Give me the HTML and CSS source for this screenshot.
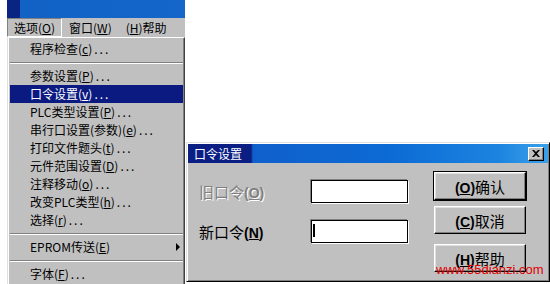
FILE: index.html
```html
<!DOCTYPE html>
<html lang="zh">
<head>
  <meta charset="UTF-8">
  <title>口令设置</title>
  <link rel="stylesheet" href="styles.css">
</head>
<body>
  <div class="app">
    <div class="app-title"></div>
    <div class="menubar">
      <span class="menubar-item is-open">选项(<u>O</u>)</span>
      <span class="menubar-item">窗口(<u>W</u>)</span>
      <span class="menubar-item">(<u>H</u>)帮助</span>
    </div>
    <ul class="dropdown">
      <li class="item">程序检查(<u>c</u>)<span class="dots">...</span></li>
      <li class="sep"></li>
      <li class="item">参数设置(<u>P</u>)<span class="dots">...</span></li>
      <li class="item is-active">口令设置(<u>v</u>)<span class="dots">...</span></li>
      <li class="item">PLC类型设置(<u>P</u>)<span class="dots">...</span></li>
      <li class="item">串行口设置(参数)(<u>e</u>)<span class="dots">...</span></li>
      <li class="item">打印文件题头(<u>t</u>)<span class="dots">...</span></li>
      <li class="item">元件范围设置(<u>D</u>)<span class="dots">...</span></li>
      <li class="item">注释移动(<u>o</u>)<span class="dots">...</span></li>
      <li class="item">改变PLC类型(<u>h</u>)<span class="dots">...</span></li>
      <li class="item">选择(<u>r</u>)<span class="dots">...</span></li>
      <li class="sep"></li>
      <li class="item has-sub">EPROM传送(<u>E</u>)<i class="arrow"></i></li>
      <li class="sep"></li>
      <li class="item">字体(<u>F</u>)<span class="dots">...</span></li>
    </ul>
  </div>

  <div class="dialog">
    <div class="dialog-title">
      <span>口令设置</span>
      <button class="close">
        <svg width="8" height="7" viewBox="0 0 8 7"><path d="M0 0h2l2 2 2-2h2L5 3.5 8 7H6L4 5 2 7H0l3-3.5z" fill="#000"/></svg>
      </button>
    </div>
    <div class="dialog-body">
      <div class="fields">
        <div class="field is-disabled">
          <label>旧口令<b>(<u>O</u>)</b></label>
          <span class="input"></span>
        </div>
        <div class="field">
          <label>新口令<b>(<u>N</u>)</b></label>
          <span class="input"><i class="caret"></i></span>
        </div>
      </div>
      <div class="actions">
        <button class="btn is-default"><b>(<u>O</u>)</b>确认</button>
        <button class="btn btn-cancel"><b>(<u>C</u>)</b>取消</button>
        <button class="btn btn-help"><b>(<u>H</u>)</b>帮助</button>
      </div>
    </div>
  </div>

  <div class="watermark">www.55dianzi.com</div>
</body>
</html>
```

FILE: styles.css
```css
* { box-sizing: border-box; }
body {
  margin: 0;
  height: 284px;
  overflow: hidden;
  position: relative;
  background: #fff;
  display: flex; align-items: flex-start;
  font-family: "Noto Sans CJK SC", sans-serif;
  font-size: 12px;
  color: #000;
}
u { text-decoration: underline; text-underline-offset: 1px; }

/* main window, left part */
.app { margin-left: 7px; width: 178px; }
.app-title {
  height: 18px;
  background: linear-gradient(90deg, #0a2482 0, #0a2482 13px, #1262c6 13px, #1466ca 100%);
}
.menubar {
  height: 19px;
  background: #c0c0c0;
  display: flex; align-items: center;
}
.menubar-item {
  line-height: 17px;
  padding: 0 6px;
  border: 1px solid transparent;
}
.menubar-item.is-open { border-color: #808080 #fff #fff #808080; }

.dropdown {
  list-style: none;
  margin: 0;
  padding: 2px 1px 0 2px;
  height: 247px;
  background: #c0c0c0;
  border-top: 1px solid #fff;
  border-left: 1px solid #dfdfdf;
  border-right: 1px solid #404040;
  box-shadow: inset -1px 0 0 #808080, inset 1px 0 0 #fff;
}
.item {
  height: 18px;
  line-height: 18px;
  padding-left: 20px;
  white-space: nowrap;
}
.item.is-active { background: #0b1a80; color: #fff; }
.dots { letter-spacing: 2px; margin-left: 2px; }
.has-sub { display: flex; align-items: center; padding-right: 3px; }
.arrow {
  margin-left: auto;
  width: 0; height: 0;
  border-top: 4px solid transparent;
  border-bottom: 4px solid transparent;
  border-left: 4px solid #000;
}
.sep {
  height: 0;
  margin: 4px 0 3px;
  border-top: 1px solid #808080;
  border-bottom: 1px solid #fff;
}

/* dialog */
.dialog {
  margin: 142px 0 0 1px;
  width: 364px;
  height: 140px;
  padding: 1px;
  background: #c0c0c0;
  border: 1px solid;
  border-color: #dfdfdf #000 #000 #dfdfdf;
  box-shadow: inset 1px 1px 0 #fff, inset -1px -1px 0 #808080;
}
.dialog-title {
  height: 19px;
  padding: 0 4px 0 6px;
  display: flex; align-items: center; justify-content: space-between;
  color: #fff;
  background: linear-gradient(90deg, #0a1e84 0, #0a1e84 63px, #1060cc 65px, #0c6ad4 200px, #1c84e0 310px, #3aa0ea 100%);
}
.close {
  width: 16px; height: 14px;
  padding: 0;
  display: flex; align-items: center; justify-content: center;
  background: #c0c0c0;
  border: 1px solid;
  border-color: #fff #000 #000 #fff;
  box-shadow: inset -1px -1px 0 #808080;
}
.dialog-body {
  display: flex;
  padding: 8px 0 0 11px;
}
.fields {
  margin-top: 9px;
  display: flex; flex-direction: column; gap: 17px;
}
.field { display: flex; align-items: center; height: 23px; }
.field label { width: 112px; font-size: 15px; }
.field b, .btn b { font-family: "Liberation Sans", sans-serif; font-size: 14px; }
.field.is-disabled label { color: #808080; text-shadow: 1px 1px 0 #fff; }
.input {
  display: block;
  width: 97px; height: 23px;
  background: #fff;
  border: 1px solid #000;
  box-shadow: -1px -1px 0 #808080, 1px 1px 0 #fff;
}
.caret {
  display: block;
  width: 2px; height: 13px;
  margin: 3px 0 0 1px;
  background: #000;
}
.actions {
  margin-left: 26px;
  padding-top: 1px;
  display: flex; flex-direction: column;
}
.btn {
  width: 92px; height: 28px;
  padding: 0;
  font-family: "Noto Sans CJK SC", sans-serif;
  font-size: 15px;
  color: #000;
  background: #c0c0c0;
  border: 1px solid;
  border-color: #fff #000 #000 #fff;
  box-shadow: inset -1px -1px 0 #808080, inset 1px 1px 0 #dfdfdf;
}
.btn.is-default { outline: 1px solid #000; }
.btn-cancel { margin-top: 6px; }
.btn-help { margin-top: 10px; }

.watermark {
  position: absolute;
  left: 436px; top: 262px;
  color: #e00000;
  font-family: "Liberation Sans", sans-serif;
  font-size: 13px;
}
```
